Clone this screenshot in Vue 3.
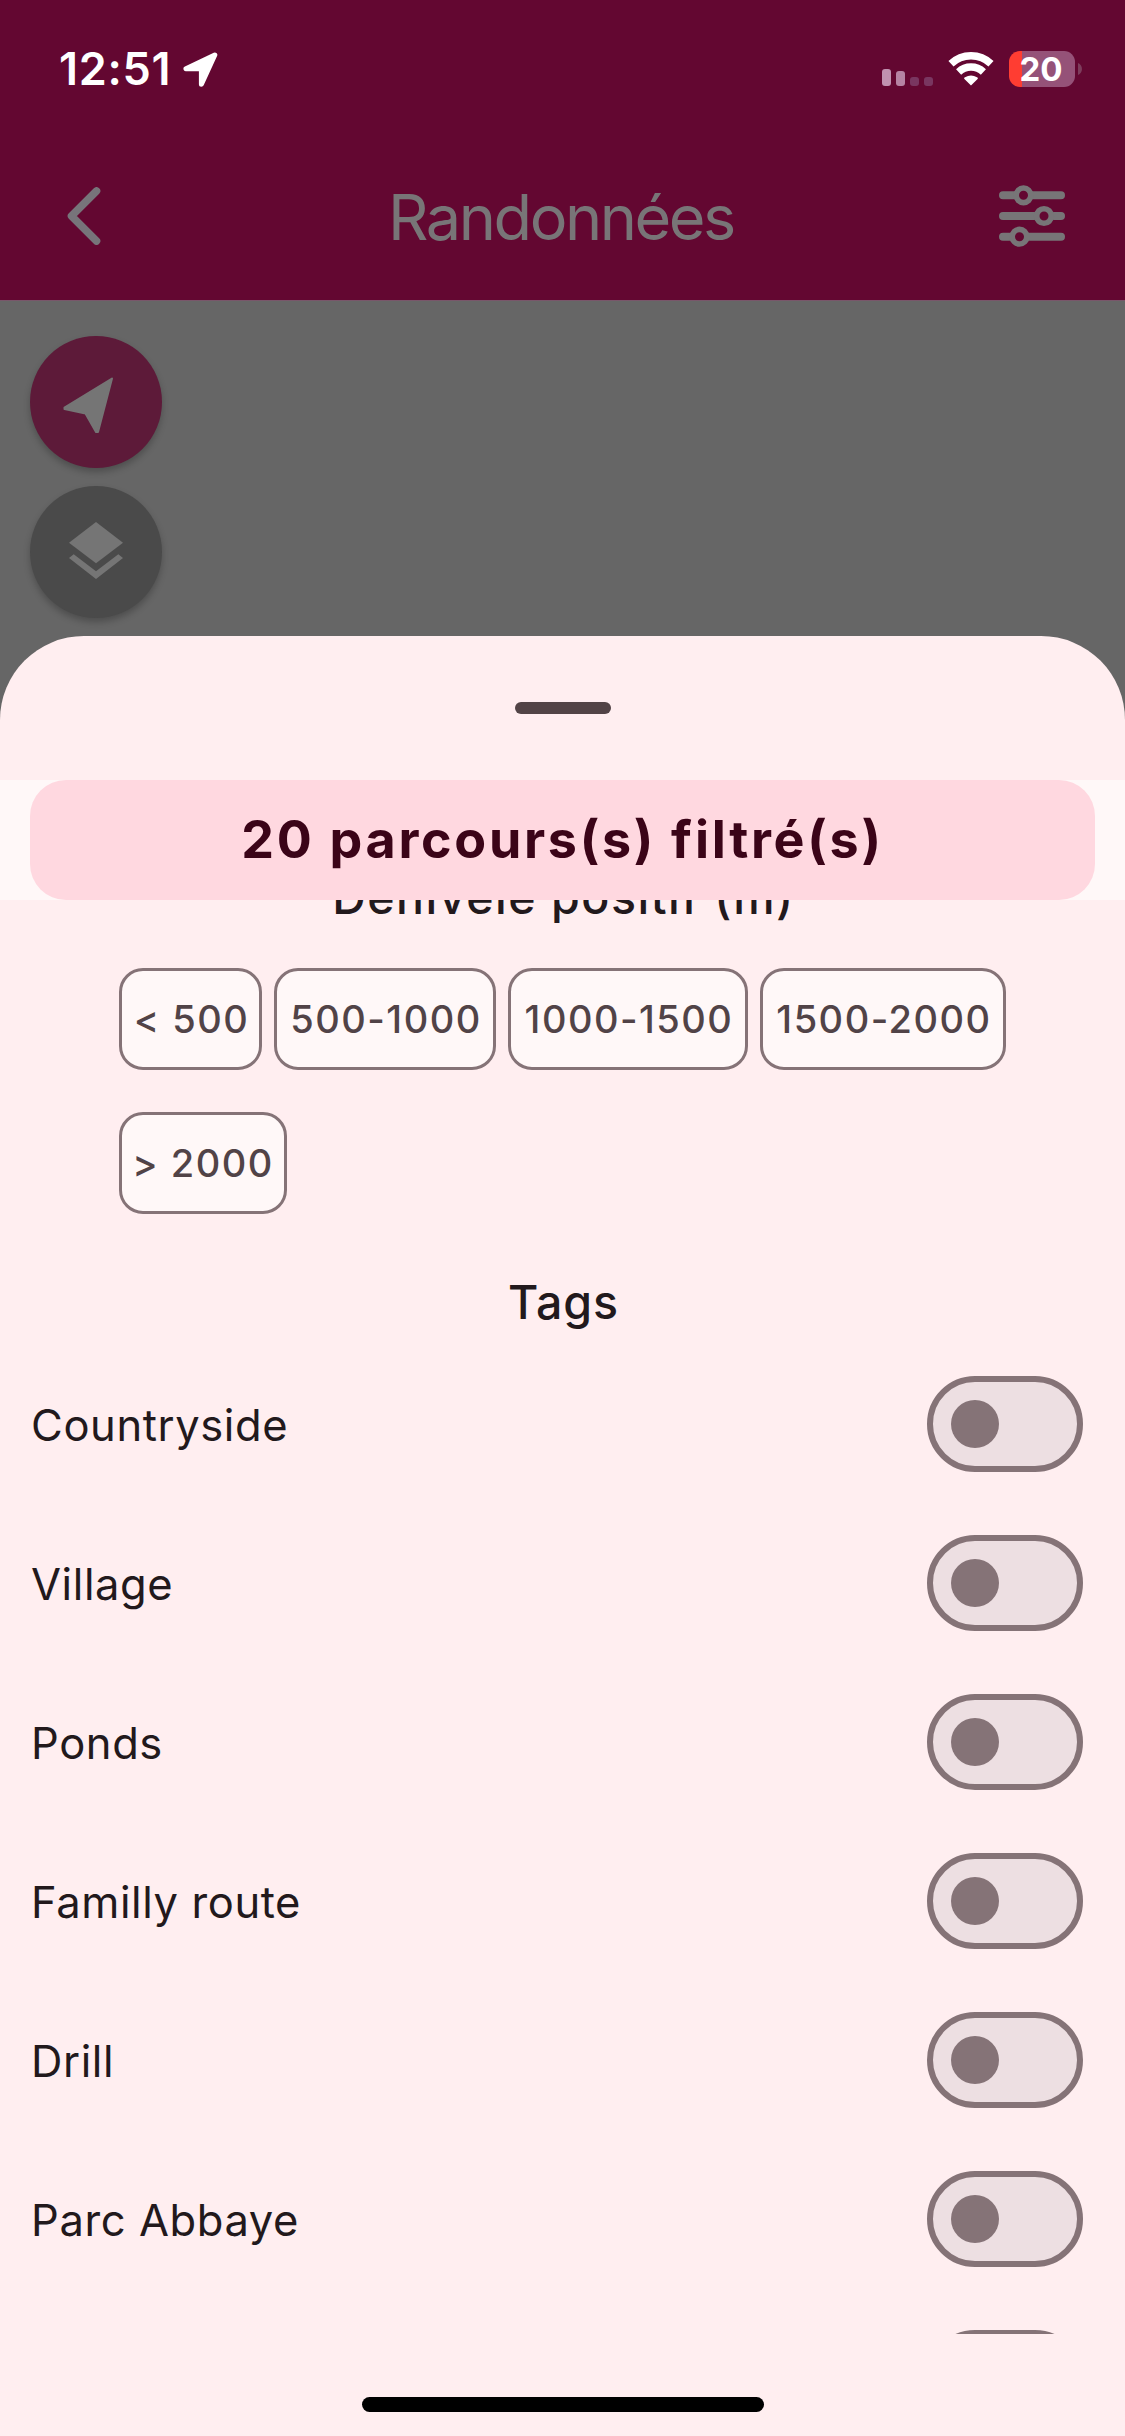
<script setup>
const ranges = ['< 500', '500-1000', '1000-1500', '1500-2000', '> 2000']
const tags = ['Countryside', 'Village', 'Ponds', 'Familly route', 'Drill', 'Parc Abbaye', '']
</script>

<template>
  <div class="screen">
    <header class="header">
      <div class="status">
        <span class="clock">12:51</span>
        <svg class="location" viewBox="0 0 35 35" width="35" height="35">
          <path d="M31.8 3L3 16.8H18.4V32.2Z" fill="#fff" stroke="#fff" stroke-width="5" stroke-linejoin="round" />
        </svg>
        <div class="signal"><i></i><i></i><i></i><i></i></div>
        <svg class="wifi" viewBox="0 0 46 34" width="46" height="34">
          <g fill="none" stroke="#fff" stroke-width="7.4">
            <path d="M3 11.8A29 29 0 0 1 43 11.8" />
            <path d="M10.6 20A18 18 0 0 1 35.4 20" />
          </g>
          <path d="M23 33.6L16.4 27C15.8 26.2 16.3 25.6 17 25.2A12 12 0 0 1 29 25.2C29.7 25.6 30.2 26.2 29.6 27Z" fill="#fff" />
        </svg>
        <div class="battery">20</div>
        <svg class="battery-cap" viewBox="0 0 4 12" width="4" height="12"><path d="M0 0C5.3 2 5.3 10 0 12Z" fill="#7d3d5c" /></svg>
      </div>
      <nav class="nav">
        <svg class="back" viewBox="0 0 34 58" width="34" height="58">
          <path d="M29.5 4L4.5 29L29.5 54" fill="none" stroke="#77747a" stroke-width="7.6" stroke-linecap="round" stroke-linejoin="round" />
        </svg>
        <h1>Randonnées</h1>
        <svg class="sliders" viewBox="0 0 66 62" width="66" height="62">
          <g fill="none" stroke="#777577" stroke-width="8" stroke-linecap="round">
            <path d="M4 10.3H14.5M34.5 10.3H62" />
            <path d="M4 31H35M55 31H62" />
            <path d="M4 51.7H10.5M30.5 51.7H62" />
          </g>
          <g fill="none" stroke="#777577" stroke-width="5.6">
            <circle cx="24.5" cy="10.3" r="7.3" />
            <circle cx="45" cy="31" r="7.3" />
            <circle cx="20.5" cy="51.7" r="7.3" />
          </g>
        </svg>
      </nav>
    </header>

    <section class="map">
      <button class="fab locate">
        <svg viewBox="0 0 52 58" width="52" height="58">
          <path d="M49 1.5L1.5 30.5V32L22.5 36.5L33 55H35Z" fill="#757575" stroke="#757575" stroke-width="2" stroke-linejoin="round" />
        </svg>
      </button>
      <button class="fab layers">
        <svg viewBox="0 0 54 57" width="54" height="57">
          <path d="M27 0L54 20.7L27 41.3L0 20.7Z" fill="#757575" />
          <path d="M4.7 32.3L27 49.3L49.3 32.3L54 36L27 57L0 36Z" fill="#757575" />
        </svg>
      </button>
    </section>

    <main class="sheet">
      <div class="grip"><span></span></div>
      <div class="banner"><strong>20 parcours(s) filtré(s)</strong></div>
      <div class="content">
        <h2 class="elevation">Dénivelé positif (m)</h2>
        <div class="chips">
          <button v-for="range in ranges" :key="range" class="chip">{{ range }}</button>
        </div>
        <h2 class="tags-title">Tags</h2>
        <label v-for="(tag, i) in tags" :key="i" class="row">
          <span>{{ tag }}</span>
          <span class="switch"><i></i></span>
        </label>
      </div>
      <footer class="footer"><span></span></footer>
    </main>
  </div>
</template>

<style>
body { margin: 0; background: #666; }
</style>

<style scoped>
* { box-sizing: border-box; }
.screen {
  width: 1125px; height: 2436px; overflow: hidden;
  display: flex; flex-direction: column;
  background: #666; font-family: Inter, "Liberation Sans", sans-serif;
}
svg { display: block; flex: none; }
h1, h2 { margin: 0; }
button { font-family: inherit; padding: 0; border: 0; }

.header { height: 301px; flex: none; background: #630731; border-bottom: 1px solid #79566a; }
.status { height: 132px; padding: 6px 43px 0 58px; display: flex; align-items: center; color: #fff; }
.clock { width: 125px; padding-left: 1px; font-size: 45px; font-weight: 600; letter-spacing: 0.7px; line-height: 54px; }
.signal { margin-left: auto; height: 34px; display: flex; align-items: flex-end; gap: 5px; }
.signal i { width: 9px; height: 9px; border-radius: 3px; background: #793660; }
.signal i:nth-child(1) { height: 17px; background: #c092b0; }
.signal i:nth-child(2) { height: 15px; background: #b683a3; }
.wifi { margin-left: 15px; }
.battery {
  width: 66px; height: 36px; margin-left: 15px; padding-right: 2px; border-radius: 11px;
  background: linear-gradient(90deg, #ff3d32 13px, #955278 13px);
  font-size: 33px; font-weight: 700; line-height: 36px; text-align: center;
}
.battery-cap { margin-left: 3px; }

.nav { height: 168px; padding: 0 60px 0 67px; display: flex; align-items: center; justify-content: space-between; }
.nav h1 { color: #787577; font-size: 63px; font-weight: 400; letter-spacing: -2.45px; line-height: 76px; margin: 2px 0 0 22px; }

.map { height: 335px; flex: none; padding: 35px 30px 0; display: flex; flex-direction: column; gap: 18px; }
.fab {
  width: 132px; height: 132px; flex: none; border-radius: 50%;
  display: flex; align-items: center; justify-content: center;
  box-shadow: 0 4px 7px rgba(0, 0, 0, 0.24);
}
.locate { background: #5d1a39; padding: 7px 14px 0 0; }
.layers { background: #4a4a4a; padding-bottom: 3px; }

.sheet {
  height: 1800px; flex: none; display: flex; flex-direction: column;
  background: #ffeef0; border-radius: 84px 84px 0 0;
}
.grip { height: 144px; flex: none; padding-top: 66px; display: flex; justify-content: center; }
.grip span { width: 96px; height: 12px; border-radius: 6px; background: #524346; }
.banner { height: 120px; flex: none; padding: 0 30px; background: #fff8f8; position: relative; z-index: 1; }
.banner strong {
  display: block; height: 120px; border-radius: 36px; background: #ffd8e0; color: #3b0418;
  font-size: 52px; font-weight: 700; letter-spacing: 2.7px; line-height: 119px; text-align: center;
}
.content { height: 1434px; flex: none; overflow: hidden; }
.content h2 { padding-left: 2px; color: #22191c; font-size: 46.5px; font-weight: 500; line-height: 60px; text-align: center; }
.elevation { margin-top: -33px; letter-spacing: 1.52px; }
.chips { margin: 41px 0 0 119px; display: flex; flex-wrap: wrap; gap: 42px 12px; }
.chip {
  height: 102px; border: 3px solid #857377; border-radius: 24px; background: #fff8f8; padding-left: 2px;
  color: #514347; font-size: 38px; font-weight: 450; letter-spacing: 1.5px; line-height: 96px; white-space: nowrap;
}
.chip:nth-child(1) { width: 143px; }
.chip:nth-child(2) { width: 222px; }
.chip:nth-child(3) { width: 240px; }
.chip:nth-child(4) { width: 246px; }
.chip:nth-child(5) { width: 168px; padding-left: 0; }
.content .tags-title { margin: 58px 0 12px; letter-spacing: 0.94px; }
.row { height: 159px; padding: 0 42px 0 31px; display: flex; align-items: center; justify-content: space-between; color: #22191c; font-size: 43.5px; letter-spacing: 0.6px; }
.row > span:first-child { padding-top: 2px; }
.switch { width: 156px; height: 96px; border: 6px solid #857377; border-radius: 48px; background: #eddfe2; display: flex; align-items: center; padding-left: 18px; }
.switch i { width: 48px; height: 48px; border-radius: 50%; background: #857377; }
.footer { height: 102px; flex: none; padding-top: 63px; display: flex; justify-content: center; }
.footer span { width: 402px; height: 15px; border-radius: 8px; background: #000; }
</style>
